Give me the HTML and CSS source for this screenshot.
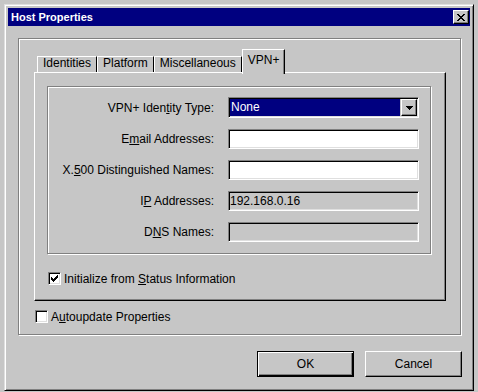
FILE: index.html
```html
<!DOCTYPE html>
<html>
<head>
<meta charset="utf-8">
<title>Host Properties</title>
<link rel="stylesheet" href="styles.css">
</head>
<body>
<div class="window">
  <div class="titlebar">
    <span class="title">Host Properties</span>
    <span class="close"><svg width="8" height="7" viewBox="0 0 8 7" shape-rendering="crispEdges"><path fill="#000" d="M0 0h2v1H0z M6 0h2v1H6z M1 1h2v1H1z M5 1h2v1H5z M2 2h4v1H2z M3 3h2v1H3z M2 4h4v1H2z M1 5h2v1H1z M5 5h2v1H5z M0 6h2v1H0z M6 6h2v1H6z"/></svg></span>
  </div>
  <div class="content">
    <div class="group">
      <div class="tabs">
        <div class="tab">Identities</div>
        <div class="tab">Platform</div>
        <div class="tab">Miscellaneous</div>
        <div class="tab selected">VPN+</div>
      </div>
      <div class="panel">
        <div class="frame">
          <label class="lbl">VPN+ Iden<u>t</u>ity Type:</label>
          <div class="combo">
            <span class="combo-value">None</span>
            <span class="combo-btn"><svg width="7" height="4" viewBox="0 0 7 4" shape-rendering="crispEdges"><path fill="#000" d="M0 0h7v1H0z M1 1h5v1H1z M2 2h3v1H2z M3 3h1v1H3z"/></svg></span>
          </div>
          <label class="lbl">E<u>m</u>ail Addresses:</label>
          <div class="field"></div>
          <label class="lbl">X.<u>5</u>00 Distinguished Names:</label>
          <div class="field"></div>
          <label class="lbl">I<u>P</u> Addresses:</label>
          <div class="field ro">192.168.0.16</div>
          <label class="lbl">D<u>N</u>S Names:</label>
          <div class="field ro"></div>
        </div>
        <div class="check check-init">
          <span class="cb"><svg width="9" height="9" viewBox="0 0 9 9" shape-rendering="crispEdges"><path fill="#000" d="M7 1h1v1H7z M6 2h2v1H6z M1 3h1v1H1z M5 3h3v1H5z M1 4h2v1H1z M4 4h3v1H4z M1 5h5v1H1z M2 6h3v1H2z M3 7h1v1H3z"/></svg></span>
          <span>Initialize from <u>S</u>tatus Information</span>
        </div>
      </div>
      <div class="check check-auto">
        <span class="cb"></span>
        <span>A<u>u</u>toupdate Properties</span>
      </div>
    </div>
    <div class="buttons">
      <button class="btn default">OK</button>
      <button class="btn">Cancel</button>
    </div>
  </div>
</div>
</body>
</html>
```

FILE: styles.css
```css
* { box-sizing: border-box; }
html, body { margin: 0; padding: 0; }
body {
  background: #c6c6c6;
  font-family: "Liberation Sans", Arial, sans-serif;
  font-size: 12px;
  color: #000;
  width: 478px;
  height: 392px;
  overflow: hidden;
}
.window {
  margin: 4px 0 0 4px;
  width: 470px;
  height: 387px;
  background: #c6c6c6;
  border: 1px solid;
  border-color: #dfdfdf #000 #000 #dfdfdf;
  box-shadow: inset 1px 1px 0 #fff, inset -1px -1px 0 #808080;
  padding: 3px;
  display: flex;
  flex-direction: column;
}
.titlebar {
  height: 18px;
  flex: none;
  background: #000080;
  color: #fff;
  display: flex;
  align-items: center;
  justify-content: space-between;
  padding: 0 1px 0 3px;
}
.title { font-weight: bold; font-size: 11px; }
.close {
  width: 16px;
  height: 14px;
  background: #c6c6c6;
  border: 1px solid;
  border-color: #fff #000 #000 #fff;
  box-shadow: inset -1px -1px 0 #808080;
  display: flex;
  align-items: center;
  justify-content: center;
}
.close svg { display: block; }
.content { padding: 12px 0 0 10px; }
.group {
  width: 443px;
  height: 297px;
  border: 1px solid #808080;
  box-shadow: inset 1px 1px 0 #fff, 1px 1px 0 #fff;
  padding: 10px 0 0 15px;
}
.tabs {
  display: flex;
  align-items: flex-end;
  height: 25px;
  margin: 0 0 -2px 3px;
}
.tab {
  height: 16px;
  margin-bottom: 2px;
  padding: 0 5px;
  border-top: 1px solid #fff;
  border-left: 1px solid #fff;
  border-right: 1px solid #000;
  line-height: 12px;
  white-space: nowrap;
}
.tab.selected {
  height: 25px;
  margin-bottom: 0;
  padding-top: 4px;
  position: relative;
  z-index: 1;
  background: #c6c6c6;
  box-shadow: inset -1px 0 0 #808080;
}
.panel {
  width: 412px;
  height: 229px;
  border: 1px solid;
  border-color: #fff #000 #000 #fff;
  box-shadow: inset -1px -1px 0 #808080;
  padding: 13px 0 0 12px;
}
.frame {
  width: 384px;
  height: 168px;
  border: 1px solid #808080;
  box-shadow: inset 1px 1px 0 #fff, 1px 1px 0 #fff;
  padding-top: 10px;
  display: grid;
  grid-template-columns: 166px 191px;
  grid-template-rows: 21px 20px 20px 20px 20px;
  column-gap: 14px;
  row-gap: 11px;
  align-content: start;
}
.lbl {
  text-align: right;
  align-self: center;
  white-space: nowrap;
}
.field {
  border: 1px solid;
  border-color: #808080 #fff #fff #808080;
  box-shadow: inset 1px 1px 0 #000, inset -1px -1px 0 #dfdfdf;
  background: #fff;
  padding: 0 1px 0 1px;
  line-height: 18px;
  white-space: nowrap;
}
.field.ro { background: #c6c6c6; }
.combo {
  display: flex;
  border: 1px solid;
  border-color: #808080 #fff #fff #808080;
  box-shadow: inset 1px 1px 0 #000, inset -1px -1px 0 #dfdfdf;
  background: #c6c6c6;
  padding: 1px 1px 1px 1px;
}
.combo-value {
  flex: 1;
  background: #000080;
  color: #fff;
  padding-left: 1px;
  line-height: 17px;
}
.combo-btn {
  width: 16px;
  margin-left: 1px;
  border: 1px solid;
  border-color: #fff #000 #000 #fff;
  box-shadow: inset -1px -1px 0 #808080;
  display: flex;
  align-items: center;
  justify-content: center;
}
.combo-btn svg { display: block; }
.check {
  display: flex;
  align-items: center;
  gap: 3px;
  height: 13px;
  white-space: nowrap;
}
.check-init { margin: 18px 0 0 1px; }
.check-auto { margin: 9px 0 0 1px; }
.cb {
  width: 13px;
  height: 13px;
  flex: none;
  border: 1px solid;
  border-color: #808080 #fff #fff #808080;
  box-shadow: inset 1px 1px 0 #000, inset -1px -1px 0 #dfdfdf;
  background: #fff;
  padding: 1px;
}
.cb svg { display: block; }
.buttons {
  display: flex;
  justify-content: flex-end;
  gap: 11px;
  margin-top: 16px;
  padding-right: 8px;
}
.btn {
  width: 97px;
  height: 26px;
  padding: 0;
  font-family: "Liberation Sans", Arial, sans-serif;
  font-size: 12px;
  color: #000;
  background: #c6c6c6;
  border: 1px solid;
  border-color: #fff #000 #000 #fff;
  box-shadow: inset -1px -1px 0 #808080;
}
.btn.default {
  border: 1px solid #000;
  box-shadow: inset 1px 1px 0 #fff, inset -1px -1px 0 #000, inset -2px -2px 0 #808080;
}
```
